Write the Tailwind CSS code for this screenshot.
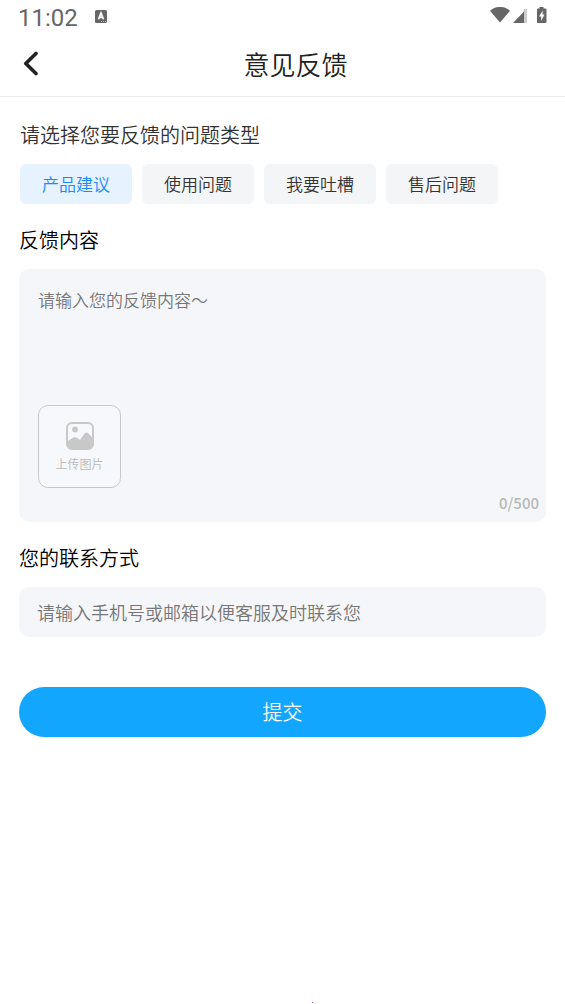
<!DOCTYPE html>
<html lang="zh-CN">
<head>
<meta charset="utf-8">
<meta name="viewport" content="width=device-width, initial-scale=1">
<title>意见反馈</title>
<script src="https://cdn.jsdelivr.net/npm/@tailwindcss/browser@4"></script>
</head>
<body class="flex min-h-screen flex-col bg-white font-['Noto_Sans_CJK_SC',sans-serif] font-[350] text-[#333]">
  <div class="flex h-8 items-center justify-between pr-[18px] pl-[18px] text-[#666]">
    <div class="flex items-center gap-4 pt-1">
      <span class="font-[Roboto,sans-serif] text-2xl leading-8 font-normal">11:02</span>
      <svg class="mb-1 h-[13px] w-[13px]" viewBox="0 0 13 13" aria-hidden="true">
        <rect x="1" width="12" height="13" rx="1.5" fill="#666"/>
        <path d="M4.500 9.200 7 3 9.500 9.200M5.400 7.400h3.200" fill="none" stroke="#fff" stroke-width="1.700"/>
        <path d="M7 11.500h5" stroke="#bbb" stroke-dasharray="1 1"/>
      </svg>
    </div>
    <svg class="h-[18px] w-[57px]" viewBox="0 0 57 18" aria-hidden="true">
      <path d="M0 3.700C6-1.300 14-1.300 20 3.700L10 15.500z" fill="#666"/>
      <path d="M33.500 2v14H37V2z" fill="#ccc"/>
      <path d="M23 16 34 4.500V16z" fill="#666"/>
      <path d="M49.500 0h4V1.500h2a1 1 0 0 1 1 1v12.500a1 1 0 0 1-1 1h-7.500a1 1 0 0 1-1-1V2.500a1 1 0 0 1 1-1h1.500z" fill="#666"/>
      <path d="M52.800 3.500 49 9.500h2.200v4.500l3.300-6.500h-2z" fill="#fff"/>
    </svg>
  </div>

  <header class="flex h-[65px] items-center border-b border-[#ebebeb] pr-5 pl-[18px]">
    <button type="button" aria-label="返回" class="flex h-10 w-7 items-center">
      <svg class="h-[26px] w-[26px]" viewBox="0 0 26 26" fill="none" stroke="#222" stroke-width="3.600" stroke-linecap="round" stroke-linejoin="round" aria-hidden="true"><path d="M18 2.500 7.800 12.500l10.200 10"/></svg>
    </button>
    <h1 class="flex-1 text-center text-[26px] leading-9 font-[350] text-[#222]">意见反馈</h1>
  </header>

  <main class="px-[19px] pt-6">
    <form>
      <fieldset class="pl-px">
        <legend class="text-xl leading-7">请选择您要反馈的问题类型</legend>
        <div class="mt-[15px] flex flex-wrap gap-2.5 text-[17px] leading-10">
          <button type="button" aria-pressed="true" class="h-10 min-w-28 rounded-md bg-[#e6f3ff] px-5 text-[#1989fa]">产品建议</button>
          <button type="button" aria-pressed="false" class="h-10 min-w-28 rounded-md bg-[#f3f5f6] px-5">使用问题</button>
          <button type="button" aria-pressed="false" class="h-10 min-w-28 rounded-md bg-[#f3f5f6] px-5">我要吐槽</button>
          <button type="button" aria-pressed="false" class="h-10 min-w-28 rounded-md bg-[#f3f5f6] px-5">售后问题</button>
        </div>
      </fieldset>

      <label for="content" class="mt-[22px] block text-xl leading-7 text-black">反馈内容</label>
      <div class="mt-[15px] flex flex-col rounded-[10px] bg-[#f4f6fa] px-[19px] pt-[18px] pb-1">
        <textarea id="content" maxlength="500" placeholder="请输入您的反馈内容～" class="block h-[118px] w-full resize-none text-[17px] leading-[26px] outline-none placeholder:text-[#777]"></textarea>
        <button type="button" class="flex h-[83px] w-[83px] flex-col items-center rounded-[10px] border border-[#c8c8c8] bg-[#f7f8fb] pt-4 text-xs leading-5 text-[#b8b8b8]">
          <svg class="mb-1 h-7 w-7" viewBox="0 0 28 28" aria-hidden="true">
            <rect x="1" y="1" width="26" height="26" rx="5" fill="none" stroke="#c8c8c8" stroke-width="2"/>
            <circle cx="9" cy="7.500" r="2.900" fill="#c8c8c8"/>
            <path d="M1 19.500 7.500 15.500Q9.500 14.500 11.500 16.200L14 18 18.500 11.500Q20.500 9.500 22.500 11.500L27 16.500V22a5 5 0 0 1-5 5H6a5 5 0 0 1-5-5z" fill="#c8c8c8"/>
          </svg>
          上传图片
        </button>
        <output for="content" class="mt-0.5 mb-0.5 -mr-3 self-end text-[15px] leading-[26px] font-medium text-[#b8b8b8]">0/500</output>
      </div>

      <label for="contact" class="mt-[22px] block text-xl leading-7 text-black">您的联系方式</label>
      <input id="contact" type="text" placeholder="请输入手机号或邮箱以便客服及时联系您" class="mt-[15px] block h-[50px] w-full rounded-[10px] bg-[#f4f6fa] px-[18px] text-lg outline-none placeholder:text-[#777]">

      <button type="submit" class="mt-[50px] block h-[50px] w-full rounded-full bg-[#13a6ff] text-xl text-white">提交</button>
    </form>
  </main>
  <div class="mt-auto mb-px ml-[60px] h-px w-px self-center bg-[#a35aa8]"></div>
</body>
</html>
